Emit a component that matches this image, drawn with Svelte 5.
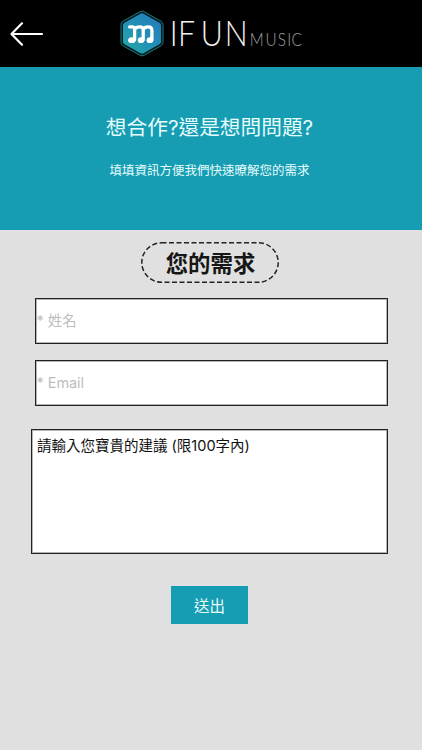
<script lang="ts">
    let name = '';
    let email = '';
    let message = '請輸入您寶貴的建議 (限100字內)';
</script>

<div class="page">
    <header class="topbar">
        <button class="back" aria-label="返回">
            <svg width="34" height="24" viewBox="0 0 34 24">
                <path d="M12 1.3 L1.5 12 L12 22.7 M1.5 12 H32" />
            </svg>
        </button>
        <svg class="logo" width="184" height="50" viewBox="0 0 184 50">
            <defs>
                <linearGradient id="hex" x1="1" y1="0" x2="0" y2="1">
                    <stop offset="0" stop-color="#2379b8" />
                    <stop offset="0.5" stop-color="#238fb7" />
                    <stop offset="1" stop-color="#21aaa5" />
                </linearGradient>
            </defs>
            <path class="hex-ring" d="M20.2 2.6 Q22 1.6 23.8 2.6 L41.2 12.3 Q43 13.4 43 15.5 V33.5 Q43 35.6 41.2 36.7 L23.8 46.4 Q22 47.4 20.2 46.4 L2.8 36.7 Q1 35.6 1 33.5 V15.5 Q1 13.4 2.8 12.3 Z" />
            <path fill="url(#hex)" d="M20.5 4.7 Q22 3.9 23.5 4.7 L39.5 13.7 Q41 14.5 41 16.3 V32.7 Q41 34.5 39.5 35.3 L23.5 44.3 Q22 45.1 20.5 44.3 L4.5 35.3 Q3 34.5 3 32.7 V16.3 Q3 14.5 4.5 13.7 Z" />
            <path class="note" d="M9.6 17.9 H12.2 Q14.6 17.9 14.6 20.5 V30.8 M14.6 20.5 Q16 17.9 19.5 17.9 Q23.2 17.9 23.2 21 V30.8 M23.2 20.5 Q24.6 17.9 28 17.9 Q31.9 17.9 31.9 21.5 V30.8" />
            <g fill="#fff">
                <ellipse cx="11.8" cy="31.2" rx="3.7" ry="2.9" />
                <ellipse cx="21" cy="31.2" rx="3.2" ry="2.9" />
                <ellipse cx="29.9" cy="31.2" rx="3.3" ry="2.9" />
            </g>
            <g class="brand" transform="translate(0 37.3) scale(0.88 1)">
                <text x="56.5 65.8 91.8 119">IFUN</text>
            </g>
            <g class="brand-sub" transform="translate(0 37.2) scale(0.9 1)">
                <text x="144.3 161.6 175.4 185.8 190.7">MUSIC</text>
            </g>
        </svg>
    </header>

    <section class="intro">
        <h1>想合作?還是想問問題?</h1>
        <p>填填資訊方便我們快速暸解您的需求</p>
    </section>

    <form class="contact" on:submit|preventDefault>
        <div class="badge">
            <svg width="138" height="41" viewBox="0 0 138 41">
                <rect x="0.8" y="0.8" width="136.4" height="39.4" rx="19.7" />
                <text x="69.5" y="29.5" text-anchor="middle">您的需求</text>
            </svg>
        </div>
        <input type="text" placeholder="* 姓名" bind:value={name} />
        <input type="text" placeholder="* Email" bind:value={email} />
        <textarea bind:value={message}></textarea>
        <button class="submit" type="submit">送出</button>
    </form>
</div>

<style>
    :global(body) {
        margin: 0;
        background: #e0e0e0;
    }

    .page {
        min-height: 750px;
        background: #e0e0e0;
        font-family: Inter, "Noto Sans CJK TC", sans-serif;
    }

    .topbar {
        box-sizing: border-box;
        height: 67px;
        display: flex;
        align-items: flex-start;
        background: #000;
    }

    .back {
        width: 34px;
        height: 24px;
        margin: 22px 76px 0 10px;
        padding: 0;
        border: 0;
        background: none;
    }

    .back svg {
        display: block;
        fill: none;
        stroke: #fff;
        stroke-width: 2.2;
        stroke-linecap: round;
        stroke-linejoin: round;
    }

    .logo {
        margin-top: 9px;
    }

    .hex-ring {
        fill: #031c22;
        stroke: #187c80;
        stroke-width: 1;
    }

    .note {
        fill: none;
        stroke: #fff;
        stroke-width: 3.3;
        stroke-linecap: round;
    }

    .brand {
        font: 300 34.5px Lato, sans-serif;
        fill: #f2f2f2;
    }

    .brand-sub {
        font: 300 17px Lato, sans-serif;
        fill: #a0a0a0;
    }

    .intro {
        box-sizing: border-box;
        height: 163px;
        padding: 46px 3px 0 0;
        background: #169db3;
        color: #e6fcfd;
        text-align: center;
    }

    .intro h1 {
        margin: 0;
        font-size: 20.7px;
        font-weight: 400;
        line-height: 30px;
    }

    .intro p {
        margin: 18px 0 0;
        font-size: 12.5px;
        line-height: 20px;
    }

    .contact {
        display: flex;
        flex-direction: column;
        align-items: center;
        padding-right: 3px;
    }

    .badge {
        height: 41px;
        margin: 12px 0 15px;
    }

    .badge svg {
        display: block;
    }

    .badge rect {
        fill: none;
        stroke: #222;
        stroke-width: 1.5;
        stroke-dasharray: 5 2.5;
    }

    .badge text {
        font: 700 22.4px "Noto Sans CJK TC", sans-serif;
        fill: #161616;
    }

    input,
    textarea {
        box-sizing: border-box;
        border: 1px solid #222;
        border-radius: 0;
        background: #fff;
        box-shadow: inset 0 0 0 1px #b4b4b4;
        font-family: inherit;
        outline: none;
    }

    input {
        width: 353px;
        height: 46px;
        margin: 0 0 16px 3px;
        padding: 0 1px 2px;
        font-size: 14.4px;
    }

    input::placeholder {
        color: #bdbdc1;
        opacity: 1;
    }

    textarea {
        width: 357px;
        height: 125px;
        margin: 7px 0 32px;
        padding: 5px;
        resize: none;
        color: #111;
        font-size: 14.5px;
        line-height: 22px;
    }

    .submit {
        width: 77px;
        height: 38px;
        padding: 0;
        border: 0;
        background: #169db3;
        color: #e6fcfd;
        font-family: inherit;
        font-size: 15.5px;
    }
</style>
